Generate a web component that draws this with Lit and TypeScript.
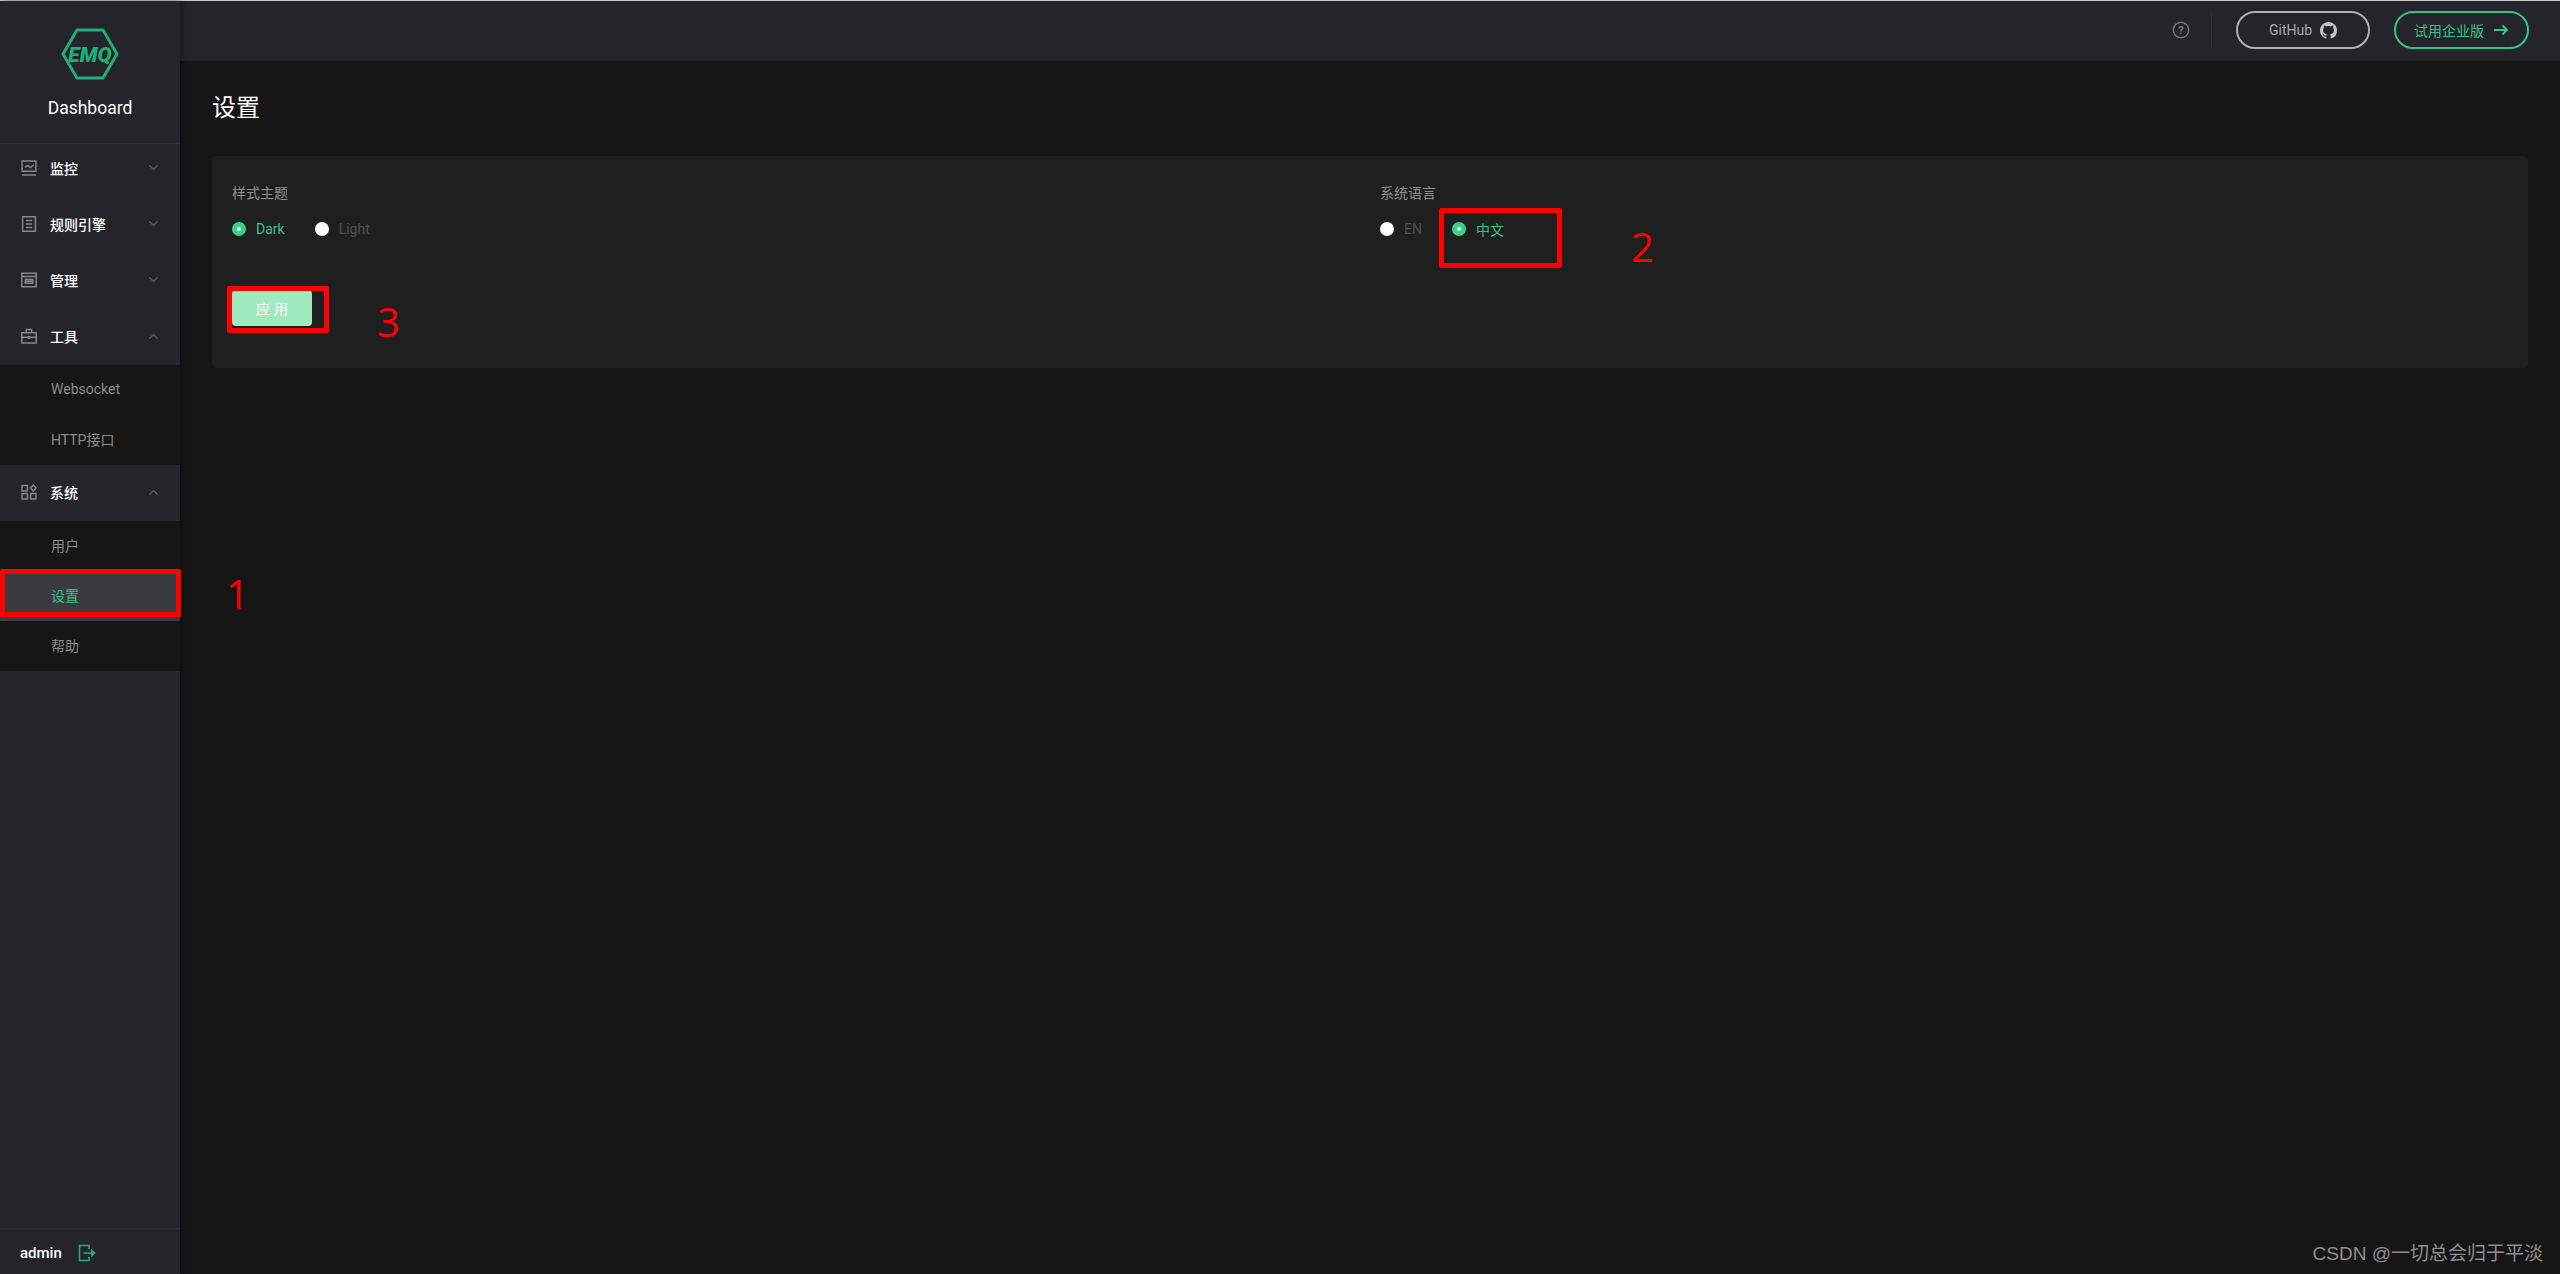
import { LitElement, css, html, svg } from "lit";
import { customElement } from "lit/decorators.js";

const icons = {
  monitor: svg`<path d="M1 1h13v9.500H1zM1 14h13M3.500 7l3-2 2.500 2 3-2.500" fill="none" stroke="currentColor" stroke-width="1.400"/>`,
  rules: svg`<path d="M1.500.7h12v13.600h-12zM4.500 4.200h6M4.500 7.500h6M4.500 10.800h6" fill="none" stroke="currentColor" stroke-width="1.400"/>`,
  manage: svg`<path d="M.7 1.200h13.600v12.600H.7zM.7 4.200h13.600M4 7h7v3.500H4zM4 8.700h7" fill="none" stroke="currentColor" stroke-width="1.400"/>`,
  tools: svg`<path d="M.7 4.500h13.600v9.500H.7zM5 4.500v-3h5v3M.7 8.700h13.600" fill="none" stroke="currentColor" stroke-width="1.400"/><path d="M6.300 7.300h2.400v2.800H6.300z" fill="currentColor"/>`,
  system: svg`<path d="M1 1.500h5v5H1zM1 9h5v5H1zM9 9h5v5H9zM11.500 1l2.600 2.800-2.600 2.800-2.600-2.800z" fill="none" stroke="currentColor" stroke-width="1.400"/>`,
};

type MenuGroup = {
  label: string;
  icon: keyof typeof icons;
  open?: boolean;
  children?: string[];
};

const menu: MenuGroup[] = [
  { label: "监控", icon: "monitor" },
  { label: "规则引擎", icon: "rules" },
  { label: "管理", icon: "manage" },
  { label: "工具", icon: "tools", open: true, children: ["Websocket", "HTTP接口"] },
  { label: "系统", icon: "system", open: true, children: ["用户", "设置", "帮助"] },
];

@customElement("app-root")
export class AppRoot extends LitElement {
  static styles = css`
    :host {
      display: block;
      position: relative;
      width: 2560px;
      height: 1274px;
      overflow: hidden;
      background: #161616;
      color: #fff;
      font-family: Roboto, "Noto Sans CJK SC", sans-serif;
      font-size: 14px;
    }
    .layout {
      display: flex;
      height: 100%;
      border-top: 1px solid #c8c8c8;
      box-sizing: border-box;
    }
    .sidebar {
      width: 180px;
      flex: none;
      display: flex;
      flex-direction: column;
      background: #24242a;
      box-shadow: 2px 0 6px rgba(0, 0, 0, 0.35);
      position: relative;
    }
    .brand {
      height: 143px;
      box-sizing: border-box;
      border-bottom: 1px solid #2e2e33;
      display: flex;
      flex-direction: column;
      align-items: center;
      padding-top: 27px;
    }
    .brand svg {
      display: block;
    }
    .brand span {
      font-size: 17.500px;
      line-height: 24px;
      margin-top: 16px;
    }
    .menu {
      flex: 1;
      margin-top: -3px;
    }
    .group {
      height: 56px;
      box-sizing: border-box;
      display: flex;
      align-items: center;
      padding: 0 22px 2px 21px;
      gap: 13px;
      font-weight: 500;
    }
    .group .icon {
      width: 16px;
      height: 16px;
      color: #85858a;
      flex: none;
    }
    .group .label {
      flex: 1;
    }
    .chevron {
      width: 9px;
      height: 6px;
      color: #5f5f64;
    }
    .sub {
      background: #161616;
    }
    .sub div {
      height: 50px;
      box-sizing: border-box;
      display: flex;
      align-items: center;
      padding: 0 0 2px 51px;
      color: #8a8a8a;
    }
    .sub div.active {
      background: #3a3b40;
      color: #34c388;
    }
    .user {
      height: 46px;
      box-sizing: border-box;
      display: flex;
      align-items: center;
      gap: 16px;
      padding: 2px 20px 0;
      border-top: 1px solid #2e2e33;
      font-size: 15px;
      font-weight: 500;
    }
    .main {
      flex: 1;
      min-width: 0;
    }
    .topbar {
      height: 60px;
      box-sizing: border-box;
      padding: 0 31px 2px 0;
      background: #24242a;
      display: flex;
      align-items: center;
      justify-content: flex-end;
    }
    .help {
      color: #7a7a80;
      padding-right: 21px;
      margin-right: 24px;
      border-right: 1px solid #2e2e33;
      height: 36px;
      display: flex;
      align-items: center;
    }
    .pill {
      width: 134px;
      height: 38px;
      box-sizing: border-box;
      border-radius: 19px;
      border: 2px solid #b0b0b4;
      color: #a9a9ad;
      display: flex;
      align-items: center;
      justify-content: center;
      gap: 8px;
    }
    .pill.trial {
      width: 135px;
      border-color: #34c388;
      color: #34c388;
      margin-left: 24px;
      gap: 10px;
    }
    .content {
      padding: 29px 32px 0 32px;
    }
    h1 {
      margin: 0;
      font-size: 24px;
      font-weight: 400;
      line-height: 36px;
    }
    .card {
      margin-top: 30px;
      height: 212px;
      box-sizing: border-box;
      padding: 27px 20px;
      background: #201f20;
      border-radius: 4px;
    }
    .fields {
      display: grid;
      grid-template-columns: 1fr 1fr;
      gap: 20px;
    }
    .field-label {
      color: #8f8f8f;
      line-height: 20px;
    }
    .radios {
      display: flex;
      gap: 30px;
      margin-top: 10px;
      height: 32px;
      align-items: center;
    }
    .radio {
      display: flex;
      align-items: center;
      gap: 10px;
      color: #4f4f52;
    }
    .radio i {
      width: 14px;
      height: 14px;
      border-radius: 50%;
      background: #fff;
      display: flex;
      align-items: center;
      justify-content: center;
    }
    .radio.checked {
      color: #34c388;
    }
    .radio.checked i {
      background: #3bd088;
    }
    .radio.checked i::after {
      content: "";
      width: 4px;
      height: 4px;
      border-radius: 50%;
      background: #fff;
    }
    button {
      display: block;
      margin-top: 45px;
      width: 80px;
      height: 36px;
      border: 0;
      border-radius: 4px;
      background: #a0eac0;
      color: #fff;
      font: inherit;
      letter-spacing: 4px;
      padding: 0 0 0 4px;
    }
    .mark {
      position: absolute;
      box-sizing: border-box;
      border: 5px solid #f00;
      border-radius: 2px;
    }
    .num {
      position: absolute;
      color: #f00;
      font-size: 40px;
      line-height: 46px;
      font-family: "Open Sans", sans-serif;
    }
    .watermark {
      position: absolute;
      right: 17px;
      bottom: 8px;
      color: #8e8e8e;
      font-family: "Liberation Sans", "Noto Sans CJK SC", sans-serif;
      font-size: 19px;
      line-height: 24px;
    }
  `;

  private chevron(open?: boolean) {
    return html`<svg class="chevron" viewBox="0 0 9 6">
      <path d=${open ? "M.5 5.500 4.500 1.500l4 4" : "M.5.5l4 4 4-4"} fill="none" stroke="currentColor" stroke-width="1.200" />
    </svg>`;
  }

  private renderGroup(group: MenuGroup) {
    return html`
      <div class="group">
        <svg class="icon" viewBox="0 0 15 15">${icons[group.icon]}</svg>
        <span class="label">${group.label}</span>
        ${this.chevron(group.open)}
      </div>
      ${group.children
        ? html`<div class="sub">
            ${group.children.map((c) => html`<div class=${c === "设置" ? "active" : ""}>${c}</div>`)}
          </div>`
        : ""}
    `;
  }

  private renderRadio(label: string, checked: boolean) {
    return html`<span class="radio ${checked ? "checked" : ""}"><i></i>${label}</span>`;
  }

  render() {
    return html`
      <div class="layout">
        <aside class="sidebar">
          <div class="brand">
            <svg width="58" height="52" viewBox="0 0 58 52">
              <path d="M16 2h26l14 24-14 24H16L2 26z" fill="none" stroke="#1fae74" stroke-width="3" stroke-linejoin="round" />
              <text x="29" y="34" text-anchor="middle" fill="#1fae74" font-family="Roboto" font-size="21" font-weight="900" font-style="italic">EMQ</text>
            </svg>
            <span>Dashboard</span>
          </div>
          <nav class="menu">${menu.map((g) => this.renderGroup(g))}</nav>
          <div class="user">
            <span>admin</span>
            <svg width="18" height="18" viewBox="0 0 18 18" fill="none" stroke="#1fae74" stroke-width="1.600">
              <path d="M11 5V1.500H1.500v15H11V13M5.500 9h11" />
              <path d="M14 6.500 16.500 9 14 11.500z" fill="#1fae74" />
            </svg>
          </div>
        </aside>
        <main class="main">
          <header class="topbar">
            <span class="help">
              <svg width="18" height="18" viewBox="0 0 18 18">
                <circle cx="9" cy="9" r="7.700" fill="none" stroke="currentColor" stroke-width="1.300" />
                <text x="9" y="13" text-anchor="middle" fill="currentColor" font-size="11" font-weight="700" font-family="Roboto">?</text>
              </svg>
            </span>
            <span class="pill">
              GitHub
              <svg width="17" height="17" viewBox="0 0 16 16" fill="#c4c4c8">
                <path d="M8 0C3.580 0 0 3.580 0 8c0 3.540 2.290 6.530 5.470 7.590.4.070.55-.17.55-.38 0-.19-.01-.82-.01-1.490-2.010.37-2.530-.49-2.690-.94-.09-.23-.48-.94-.82-1.130-.28-.15-.68-.52-.01-.53.63-.01 1.080.58 1.230.82.720 1.210 1.870.870 2.330.660.070-.520.280-.870.510-1.070-1.780-.2-3.640-.89-3.640-3.950 0-.870.310-1.590.820-2.150-.080-.2-.360-1.020.080-2.120 0 0 .670-.210 2.200.820.640-.180 1.320-.270 2-.270s1.360.090 2 .270c1.530-1.040 2.200-.820 2.200-.820.440 1.100.160 1.920.080 2.120.510.560.820 1.270.820 2.150 0 3.070-1.870 3.750-3.650 3.950.290.250.540.730.540 1.480 0 1.070-.010 1.930-.010 2.200 0 .210.150.460.550.380A8.010 8.010 0 0 0 16 8c0-4.420-3.580-8-8-8z" />
              </svg>
            </span>
            <span class="pill trial">
              试用企业版
              <svg width="15" height="12" viewBox="0 0 15 12" fill="none" stroke="currentColor" stroke-width="2">
                <path d="M0 6h13M8.500 1.500 13 6l-4.500 4.500" />
              </svg>
            </span>
          </header>
          <div class="content">
            <h1>设置</h1>
            <section class="card">
              <div class="fields">
                <div>
                  <div class="field-label">样式主题</div>
                  <div class="radios">${this.renderRadio("Dark", true)}${this.renderRadio("Light", false)}</div>
                </div>
                <div>
                  <div class="field-label">系统语言</div>
                  <div class="radios">${this.renderRadio("EN", false)}${this.renderRadio("中文", true)}</div>
                </div>
              </div>
              <button>应用</button>
            </section>
          </div>
        </main>
      </div>
      <div class="mark" style="left:0;top:569px;width:181px;height:48px"></div>
      <div class="mark" style="left:1439px;top:208px;width:123px;height:60px"></div>
      <div class="mark" style="left:227px;top:286px;width:102px;height:47px"></div>
      <span class="num" style="left:226px;top:571px">1</span>
      <span class="num" style="left:1631px;top:224px">2</span>
      <span class="num" style="left:377px;top:299px">3</span>
      <span class="watermark">CSDN @一切总会归于平淡</span>
    `;
  }
}
